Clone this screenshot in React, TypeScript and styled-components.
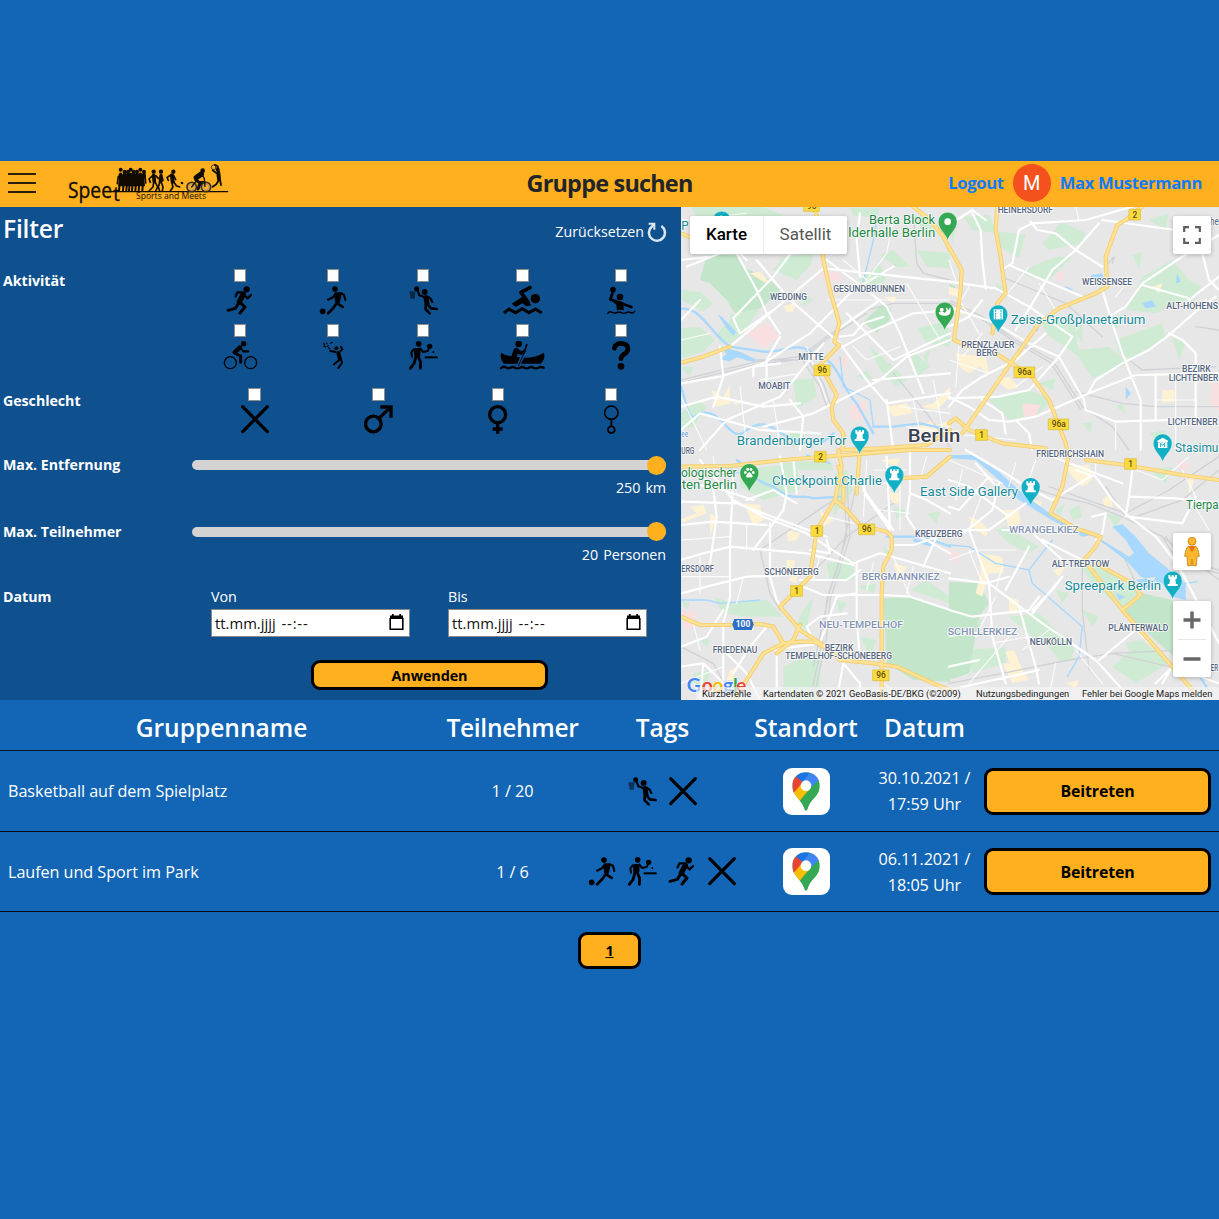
import React from "react";
import styled, { createGlobalStyle } from "styled-components";

const GlobalStyle = createGlobalStyle`
  * { box-sizing: border-box; }
  body {
    margin: 0;
    background: #1266b5;
    color: #fff;
    font-family: "Open Sans", "Noto Sans", sans-serif;
  }
`;

/* ---------- layout ---------- */

const Page = styled.div`
  display: flex;
  flex-direction: column;
  min-height: 1219px;
  padding-top: 161px;
  overflow: hidden;
`;

const Header = styled.header`
  display: grid;
  grid-template-columns: 1fr auto 1fr;
  align-items: center;
  height: 46px;
  background: #ffb01f;
`;

const HeaderLeft = styled.div`
  display: flex;
  align-items: center;
  padding: 0 0 2px 7px;
  gap: 30px;
`;

const Title = styled.h1`
  margin: 0;
  padding-bottom: 3px;
  color: #212529;
  font-size: 23.4px;
  font-weight: 700;
  letter-spacing: -0.77px;
`;

const HeaderRight = styled.div`
  display: flex;
  align-items: center;
  justify-content: flex-end;
  gap: 9px;
  padding: 0 17px 3px 0;
`;

const HeaderLink = styled.a`
  color: #0d7bff;
  font-size: 16.6px;
  font-weight: 700;
  letter-spacing: -0.34px;
`;

const Avatar = styled.div`
  display: grid;
  place-items: center;
  width: 38px;
  height: 38px;
  border-radius: 50%;
  background: #f4511e;
  color: #fff;
  font: 400 20px Roboto, sans-serif;
`;

const Main = styled.main`
  display: grid;
  grid-template-columns: 681px 1fr;
  height: 493px;
`;

/* ---------- filter ---------- */

const FilterPanel = styled.section`
  display: flex;
  flex-direction: column;
  background: #0f508f;
  font-size: 14.3px;
`;

const FilterHead = styled.div`
  display: flex;
  justify-content: space-between;
  align-items: center;
  height: 43px;
  padding: 0 14px 0 3px;
  margin-bottom: 17px;
`;

const FilterTitle = styled.h2`
  margin: 0;
  font-size: 24.6px;
  font-weight: 600;
  letter-spacing: -0.2px;
`;

const Reset = styled.button`
  display: flex;
  align-items: center;
  gap: 3px;
  padding: 5px 0 0;
  border: 0;
  background: none;
  color: #fff;
  font: inherit;
  font-size: 14.2px;

  svg {
    position: relative;
    top: 1px;
  }
`;

const Row = styled.div<{ $h: number }>`
  display: grid;
  grid-template-columns: 189px 1fr;
  height: ${(p) => p.$h}px;
  padding-left: 3px;
`;

const Label = styled.div<{ $top?: number }>`
  padding-top: ${(p) => p.$top ?? 0}px;
  line-height: 20px;
  font-weight: 700;
  font-size: 14.2px;
  letter-spacing: -0.03px;
`;

const OptionGrid = styled.div<{ $cols: string }>`
  display: grid;
  grid-template-columns: ${(p) => p.$cols};
  grid-auto-rows: 55px;
`;

const Option = styled.label`
  display: flex;
  flex-direction: column;
  align-items: center;
  padding-top: 2px;
  gap: 4px;
`;

const Check = styled.input.attrs({ type: "checkbox" })`
  appearance: none;
  width: 12.5px;
  height: 12.5px;
  margin: 0;
  border: 1px solid #8c8c8c;
  background: #fff;
`;

const SliderBlock = styled.div`
  display: flex;
  flex-direction: column;
  padding-right: 15px;
`;

const Slider = styled.input.attrs({ type: "range" })`
  appearance: none;
  width: 100%;
  height: 10px;
  margin: 5px 0 0;
  border-radius: 5px;
  background: #d3d3d3;
  &::-webkit-slider-thumb {
    appearance: none;
    width: 19px;
    height: 19px;
    border-radius: 50%;
    background: #ffb01f;
  }
`;

const SliderValue = styled.div`
  padding-top: 8px;
  line-height: 20px;
  text-align: right;
  word-spacing: 1.5px;
  letter-spacing: -0.08px;
`;

const Dates = styled.div`
  display: grid;
  grid-template-columns: 199px 199px;
  gap: 38px;
  padding-left: 19px;
`;

const DateField = styled.label`
  display: flex;
  flex-direction: column;
  line-height: 20px;
`;

const DateBox = styled.span`
  display: flex;
  align-items: center;
  justify-content: space-between;
  height: 28px;
  margin-top: 1.5px;
  padding: 0 4px 0 3px;
  border: 1px solid #8a8a8a;
  background: #fff;
  color: #111;
  font-size: 14.8px;
`;

const DateText = styled.span`
  word-spacing: 2px;
`;

const DashText = styled.span`
  letter-spacing: 0.8px;
`;

const YellowButton = styled.button<{ $w: number; $h: number; $size?: number }>`
  width: ${(p) => p.$w}px;
  height: ${(p) => p.$h}px;
  padding: 0;
  border: 3px solid #000;
  border-radius: 9px;
  background: #ffb01f;
  color: #000;
  font-family: inherit;
  font-weight: 700;
  font-size: ${(p) => p.$size ?? 14.4}px;
  letter-spacing: -0.1px;
`;

const ApplyRow = styled.div`
  padding-left: 311px;
`;

/* ---------- map ---------- */

const MapFrame = styled.section`
  position: relative;
  overflow: hidden;
  background: #e7e7e7;
  font-family: Roboto, sans-serif;
`;

const MapTypes = styled.div`
  position: absolute;
  top: 9px;
  left: 9px;
  display: flex;
  height: 38px;
  border-radius: 2px;
  background: #fff;
  box-shadow: 0 1px 4px rgba(0, 0, 0, 0.25);
`;

const MapType = styled.button<{ $active?: boolean }>`
  width: ${(p) => (p.$active ? 74 : 83)}px;
  padding: 0 0 2px;
  border: 0;
  border-right: ${(p) => (p.$active ? "1px solid #ececec" : "0")};
  background: none;
  color: ${(p) => (p.$active ? "#000" : "#565656")};
  font: ${(p) => (p.$active ? 500 : 400)} 17px Roboto, sans-serif;
`;

const MapControl = styled.div<{ $top: number; $h: number }>`
  position: absolute;
  top: ${(p) => p.$top}px;
  right: 8px;
  display: flex;
  flex-direction: column;
  align-items: center;
  justify-content: center;
  width: 38px;
  height: ${(p) => p.$h}px;
  border-radius: 2px;
  background: #fff;
  box-shadow: 0 1px 4px rgba(0, 0, 0, 0.25);
`;

const Attribution = styled.div`
  position: absolute;
  right: 0;
  bottom: 0;
  display: flex;
  height: 13px;
  color: #1a1a1a;
  font-size: 9.3px;
  line-height: 13px;
  white-space: nowrap;
`;

const Credit = styled.span<{ $w: number }>`
  width: ${(p) => p.$w}px;
  padding-left: 6px;
  background: rgba(245, 245, 245, 0.66);
`;

/* ---------- table ---------- */

const columns = "443px 139px 161px 126px 111px 239px";

const TableHead = styled.div`
  display: grid;
  grid-template-columns: ${columns};
  align-items: center;
  height: 51px;
  border-bottom: 1px solid #06182b;
  font-size: 24.6px;
  font-weight: 600;
  text-align: center;
  line-height: 1;
`;

const HeadCell = styled.div<{ $tight?: boolean }>`
  padding-top: 7px;
  letter-spacing: ${(p) => (p.$tight ? "-0.33px" : "-0.04px")};
`;

const TableRow = styled.div`
  display: grid;
  grid-template-columns: ${columns};
  align-items: center;
  height: 80.5px;
  padding-top: 1px;
  border-bottom: 1px solid #030c17;
  font-size: 16.2px;
  line-height: 26px;
  text-align: center;
  letter-spacing: -0.06px;
`;

const NameCell = styled.div`
  padding-left: 8px;
  text-align: left;
`;

const TagCell = styled.div`
  display: flex;
  justify-content: center;
  gap: 13px;
`;

const MapTile = styled.div`
  display: grid;
  place-items: center;
  width: 47px;
  height: 47px;
  margin: 0 auto;
  border-radius: 9px;
  background: #fff;
`;

const ActionCell = styled.div`
  padding-left: 4px;
  text-align: left;
  line-height: 0;
`;

const Pager = styled.nav`
  display: flex;
  justify-content: center;
  padding-top: 19.5px;
`;

const PageLink = styled(YellowButton)`
  text-decoration: underline;
`;

/* ---------- sport and gender icons ---------- */

const icons: Record<string, { w: number; art: React.ReactNode }> = {
  run: {
    w: 78,
    art: (
      <>
        <circle cx="59" cy="10" r="9.5" fill="#000" stroke="none" />
        <path d="M49 25L37 48" strokeWidth="16" />
        <path d="M46 19L31 19L26 31M52 28L62 37L72 27" strokeWidth="7" />
        <path d="M40 50L54 63L39 81M36 50L25 67L3 73" strokeWidth="9" />
      </>
    ),
  },
  soccer: {
    w: 78,
    art: (
      <>
        <circle cx="8" cy="76" r="8.5" fill="#000" stroke="none" />
        <circle cx="45" cy="9" r="8.5" fill="#000" stroke="none" />
        <path d="M48 24L60 24L55 46L50 46Z" fill="#000" strokeWidth="10" />
        <path d="M46 24L39 34L24 41M62 22L72 26L76 42" strokeWidth="6.5" />
        <path d="M51 50L40 66L24 82M54 54L68 63" strokeWidth="8" />
      </>
    ),
  },
  basketball: {
    w: 86,
    art: (
      <>
        <path d="M1 16L20 16L17 38L5 38Z" fill="#000" stroke="none" opacity=".5" />
        <circle cx="23" cy="8" r="7.5" fill="#000" stroke="none" />
        <circle cx="47" cy="18" r="9" fill="#000" stroke="none" />
        <path d="M25 12L31 28L46 33M56 32L65 38L70 48" strokeWidth="6.5" />
        <path d="M51 35L54 52" strokeWidth="15" />
        <path d="M50 56L50 70L62 82M56 56L66 67L83 69" strokeWidth="8" />
      </>
    ),
  },
  swim: {
    w: 118,
    art: (
      <>
        <path d="M81 5L54 19L76 50" strokeWidth="11" />
        <path d="M26 53L62 30L86 58L70 61L58 52L38 63Z" fill="#000" stroke="none" />
        <circle cx="97" cy="38" r="14" fill="#000" stroke="none" />
        <path d="M3 81L18 69L37 80L58 68L78 80L98 69L116 81" strokeWidth="9" strokeLinecap="butt" strokeLinejoin="miter" />
      </>
    ),
  },
  polo: {
    w: 85,
    art: (
      <>
        <circle cx="18" cy="11" r="8.5" fill="#000" stroke="none" />
        <circle cx="39" cy="33" r="10" fill="#000" stroke="none" />
        <path d="M16 22L10 40L40 51L73 63" strokeWidth="8.5" />
        <path d="M12 42L48 48L51 74Q46 68 42 73Q36 68 30 74L28 56Z" fill="#000" stroke="none" />
        <path d="M2 82Q8 74 15 79T29 80T43 80T57 80T71 80T83 76" strokeWidth="4" />
      </>
    ),
  },
  bike: {
    w: 99,
    art: (
      <>
        <circle cx="19" cy="65" r="18" strokeWidth="4" />
        <circle cx="80" cy="65" r="18" strokeWidth="4" />
        <circle cx="59" cy="8" r="8" fill="#000" stroke="none" />
        <path d="M48 19L32 34" strokeWidth="13" />
        <path d="M34 37L50 45L50 64" strokeWidth="9" />
        <path d="M49 20L58 31L73 31" strokeWidth="6.5" />
      </>
    ),
  },
  tennis: {
    w: 62,
    art: (
      <>
        <circle cx="40" cy="22" r="6" fill="#000" stroke="none" />
        <path d="M38 33L22 30M52 30L58 26L54 17" strokeWidth="6" />
        <path d="M46 36L50 52" strokeWidth="12" />
        <path d="M48 58L33 70M54 54L57 66L46 81" strokeWidth="6" />
        <path d="M2 6L4 12M3 16L8 18M10 8L12 7M13 16L16 14M23 7L28 4M21 24L16 20" strokeWidth="3.5" />
      </>
    ),
  },
  pingpong: {
    w: 86,
    art: (
      <>
        <circle cx="29" cy="8.5" r="8.5" fill="#000" stroke="none" />
        <path d="M20 26L30 26L29 44L21 44Z" fill="#000" strokeWidth="10" />
        <path d="M14 25L7 34L9 47M34 22L42 33L56 30L60 22" strokeWidth="6" />
        <circle cx="62" cy="16" r="8" fill="#000" stroke="none" />
        <circle cx="73" cy="33" r="3" fill="#000" stroke="none" />
        <path d="M47 49L86 49" strokeWidth="6" strokeLinecap="butt" />
        <path d="M20 50L15 68L4 82M29 50L35 64L34 82" strokeWidth="8.5" />
      </>
    ),
  },
  canoe: {
    w: 135,
    art: (
      <>
        <path d="M3 35Q18 46 34 45L42 24Q48 16 58 26L66 31L73 24L78 30L70 38L64 42L53 38L50 48L60 49L52 68L12 68Q-1 54 3 35Z" fill="#000" stroke="none" />
        <circle cx="56" cy="9" r="10" fill="#000" stroke="none" />
        <path d="M63 68L72 50Q105 51 132 35Q137 54 122 68Z" fill="#000" stroke="none" />
        <path d="M80 11L72 37" strokeWidth="5" />
        <path d="M72 37L55 74" strokeWidth="3" />
        <path d="M3 82Q10 74 17 79T31 80T45 80T59 80T73 80T87 80T101 80T115 80T131 80" strokeWidth="7" />
      </>
    ),
  },
  other: {
    w: 55,
    art: (
      <>
        <path d="M7 22Q10 7 27 7Q48 8 48 23Q48 32 37 39Q27 46 27 53" strokeWidth="14" />
        <circle cx="27" cy="76" r="10" fill="#000" stroke="none" />
      </>
    ),
  },
  any: { w: 84, art: <path d="M5 5L79 80M79 5L5 80" strokeWidth="9.5" /> },
  male: {
    w: 86,
    art: (
      <>
        <circle cx="28" cy="57" r="23.5" strokeWidth="10" />
        <path d="M46 39L79 7M49 6L81 6L81 38" strokeWidth="10" strokeLinecap="butt" strokeLinejoin="miter" />
      </>
    ),
  },
  female: {
    w: 58,
    art: (
      <>
        <circle cx="29" cy="29" r="24" strokeWidth="10" />
        <path d="M29 54L29 86M14 72L44 72" strokeWidth="10" strokeLinecap="butt" />
      </>
    ),
  },
  diverse: {
    w: 44,
    art: (
      <>
        <circle cx="22" cy="23" r="20" strokeWidth="4.5" />
        <path d="M22 43L22 63" strokeWidth="5.5" />
        <circle cx="22" cy="74" r="10" strokeWidth="5.5" />
      </>
    ),
  },
};

function Icon({ name }: { name: string }) {
  const { w, art } = icons[name];
  return (
    <svg width={w / 3} height={86 / 3} viewBox={`0 0 ${w} 86`} fill="none" stroke="#000" strokeLinecap="round" strokeLinejoin="round" overflow="visible">
      {art}
    </svg>
  );
}

/* ---------- header art ---------- */

const Burger = () => (
  <svg width="30" height="24" viewBox="0 0 30 24" stroke="#2b1d08" strokeWidth="2">
    <path d="M1 3H29M1 12H29M1 21H29" />
  </svg>
);

const crowd = [358, 370, 380, 388, 397, 407, 417, 428];

const Logo = () => (
  <svg width="162" height="44" viewBox="200 18 486 132" fill="none" stroke="#100b02" strokeLinecap="round" strokeLinejoin="round" overflow="visible">
    <g fill="#100b02" stroke="none" fontFamily="'Open Sans', sans-serif">
      <text x="203" y="129" fontSize="64" textLength="132" lengthAdjust="spacingAndGlyphs" stroke="#100b02" strokeWidth="1">Spee</text>
      <text x="339" y="137" fontSize="62" textLength="20" lengthAdjust="spacingAndGlyphs" stroke="#100b02" strokeWidth="1">t</text>
      <text x="407" y="131" fontSize="26" textLength="210" lengthAdjust="spacingAndGlyphs">Sports and Meets</text>
    </g>
    <path d="M330 110H682" strokeWidth="4" />
    <path d="M360 62H428L432 92H356Z" fill="#100b02" strokeWidth="4" />
    {crowd.map((x, i) => (
      <g key={x}>
        <circle cx={x + 3} cy={i % 3 === 0 ? 44 : 50} r="6" fill="#100b02" stroke="none" />
        <path d={`M${x + 3} 58V66`} strokeWidth="11" />
        <path d={`M${x + 2} 60L${x} 84L${x - 2} 107`} strokeWidth="6" />
      </g>
    ))}
    <path d="M354 64L351 86M434 62L436 84" strokeWidth="5" />
    <g strokeWidth="5">
      <circle cx="460" cy="50" r="4" fill="#100b02" />
      <path d="M460 62L462 80" strokeWidth="11" />
      <path d="M457 62L446 72L450 82M466 62L474 70M460 82L458 96L446 108M465 82L472 96L466 108" />
      <circle cx="482" cy="50" r="4" fill="#100b02" />
      <path d="M482 62L480 80" strokeWidth="10" />
      <path d="M484 62L488 76L480 82M478 82L474 96L478 108M483 82L488 96L486 108" />
      <circle cx="519" cy="50" r="4" fill="#100b02" />
      <path d="M515 61L517 80" strokeWidth="12" />
      <path d="M511 60L500 68L504 76M520 62L526 74M514 82L518 96L510 108M520 80L528 92L538 96" />
      <circle cx="545" cy="84" r="4" fill="#100b02" stroke="none" />
    </g>
    <g>
      <circle cx="574" cy="96" r="14" stroke="#3a3022" strokeWidth="5" />
      <circle cx="617" cy="96" r="14" stroke="#3a3022" strokeWidth="5" />
      <circle cx="574" cy="96" r="9" stroke="#b09a78" strokeWidth="3" />
      <circle cx="617" cy="96" r="9" stroke="#b09a78" strokeWidth="3" />
      <circle cx="607" cy="47" r="7" fill="#100b02" stroke="none" />
      <path d="M603 57L588 68" strokeWidth="16" />
      <path d="M586 74L599 84L593 102" strokeWidth="9" />
      <path d="M604 58L612 70L614 94M574 96L586 80H610M592 98L606 82" strokeWidth="4" />
    </g>
    <g strokeWidth="5.5">
      <circle cx="640" cy="37" r="7" strokeWidth="2" />
      <circle cx="652" cy="44" r="6" fill="#100b02" stroke="none" />
      <path d="M654 54L656 72" strokeWidth="12" />
      <path d="M648 54L637 46M656 52L652 34L644 29M655 76L648 88L637 95M659 74L662 90" />
    </g>
  </svg>
);

const ResetIcon = () => (
  <svg width="20" height="20" viewBox="0 0 60 60" fill="none" stroke="#dce6f0" strokeWidth="7.5">
    <path d="M43 12A24 24 0 1 1 12 16" />
    <path d="M5 5H22V23" strokeWidth="6" />
    <path d="M22 5L9 20" strokeWidth="7" />
  </svg>
);

const CalendarIcon = () => (
  <svg width="17" height="17" viewBox="0 0 17 17">
    <path d="M2 1.5H15V5H2Z" fill="#000" />
    <path d="M2.2 4V15.2H14.8V4" fill="none" stroke="#000" strokeWidth="1.6" />
    <path d="M4.8 0V3M12.2 0V3" stroke="#000" strokeWidth="1.8" />
  </svg>
);

const MapsLogo = () => (
  <svg width="28" height="39" viewBox="0 0 84 117">
    <defs>
      <clipPath id="maps-pin">
        <path d="M42 1C65 1 83 18 83 41C83 61 71 72 60 85C52 95 49 103 46 112Q42 120 38 112C35 101 31 95 24 86C12 71 1 61 1 41C1 18 19 1 42 1Z" />
      </clipPath>
    </defs>
    <g clipPath="url(#maps-pin)">
      <rect width="84" height="117" fill="#34a853" />
      <path d="M0 62L28 28L58 48L22 90L0 90Z" fill="#fbbc04" />
      <path d="M0 0L15 14L42 40L28 36L4 64L0 64Z" fill="#ea4335" />
      <path d="M13 14L32 30L56 0H13Z" fill="#1a73e8" />
      <path d="M30 32L62 -6L84 22L52 52Z" fill="#4285f4" />
      <path d="M84 22L52 52L22 88L40 117H84Z" fill="#34a853" />
    </g>
    <circle cx="42" cy="41" r="16" fill="#fff" />
  </svg>
);

/* ---------- street map, drawn in four tiles ---------- */

const tiles = [
  {
    at: "translate(0 0)",
    park: "M30 18H240L310 45L250 60H60ZM3 270L60 275L100 310L70 335L3 300ZM3 385L60 380L105 420L70 455L3 475ZM180 330L240 325L190 400L150 430L120 430L110 400ZM340 540L400 535L410 590L350 625ZM310 170L400 160L395 190L350 240L280 210ZM510 25H600L590 50L520 48ZM600 165L640 150L690 200L650 200ZM690 50L740 45L760 90L720 80ZM710 150L810 160V205L740 200ZM710 385L780 370L810 390V440L740 430ZM690 445L750 500L710 530ZM570 440L640 500L680 540L650 560L600 510ZM3 640L50 600L80 620L40 680L3 690ZM360 270L400 300L370 320ZM540 240L600 190L620 240L560 270ZM730 470L750 440L740 500ZM3 500L40 500L30 530ZM330 700L380 690L370 720L340 745ZM530 530L560 510L580 540ZM150 340L170 345L150 380Z",
    deep: "M80 165H170L190 200L270 240L300 270L260 310L240 325L165 340L140 300L90 250L60 240ZM550 365L610 310L635 330L630 360L590 400Z",
    pink: "M200 400L265 370L300 410L250 445ZM510 620L560 600L550 660L510 655ZM468 480L500 465L500 510ZM405 225L480 215L485 245L430 235Z",
    sand: "M95 570L115 575L125 600L150 555L150 610L110 620ZM210 220L240 215L270 250L250 245ZM310 320L350 305L340 335L320 335ZM610 290L650 290L640 310ZM620 620L680 610L700 640L640 650ZM720 620L760 610L810 560V590L770 630ZM700 690L760 660L770 680L720 720ZM740 690L810 660V700ZM150 600L190 600L170 615Z",
    lake: "M112 342L125 350L168 395L160 408L140 385ZM120 440L180 455L226 478L222 486L170 472L150 484L120 478L140 462Z",
    river: "M3 326C70 325 80 390 150 440L250 455C310 460 350 420 400 460C480 480 480 560 530 610L580 700M3 560C20 600 20 680 60 640C130 620 150 740 200 690C260 650 280 690 330 715C400 740 420 740 460 700M580 680L640 680L720 670L810 690",
    thinRiver: "M590 60L580 120L550 245M480 470L490 560L570 600L580 680",
    rail: "M3 540L230 485L360 470L440 410L560 330L640 310H810M3 548L230 493L360 478L450 410L560 340M360 470L420 560L440 620M375 470L430 550L450 610M700 40L710 190L730 220L810 240M200 480L380 480M640 520L740 640L810 740",
    road: "M150 440L430 205L810 245M160 355L280 230L340 150L480 50M160 355L180 400L280 330M170 160L230 270L260 340L300 400M230 180L330 300L480 430L560 540L620 610L810 580M3 550L120 530L250 490L390 400L520 270L640 200M3 620L110 590L250 620L360 610M60 750L140 660L300 590L430 430M3 690L60 640L240 690L420 700M120 440L130 530L100 620M260 550L260 480L300 410M440 180L560 270L620 320L660 400L730 580M470 390L600 300M480 410L520 405L550 370L610 350M490 440L560 400L700 340L810 330M810 420L680 470L600 540L500 590L400 640L250 680M620 600L640 750M580 540L810 520M540 230L530 120L540 40M20 200L120 160L180 80M80 60L200 180M330 600L370 650L360 750M220 530L220 500L300 490M500 340L580 420L640 480L810 400M3 180L90 170M60 300L3 360",
    lane: "M440 300H810M680 250L780 420M700 600L730 750M760 540L790 700M660 620L810 640M680 680L810 700M3 590L80 750M180 560L200 740M280 600L300 740M560 240L490 180M640 60L620 160L560 240M3 60L200 40M240 540L360 520M380 440L440 600M520 440L560 480L660 440M3 420L90 400",
    gold: "M3 488L70 470L150 440M400 20L415 60L430 180L450 270L478 370L463 425L478 435L420 495L470 585L455 620L460 660L490 700L488 750M490 750L600 745L740 735L810 690M700 20L750 60L790 110L810 150M3 100L50 120",
  },
  {
    at: "translate(807 0)",
    park: "M45 50L120 45L145 100L70 90ZM150 95L230 105L210 175L150 140ZM280 130L340 65L410 100L400 130L300 150ZM210 215L320 170L370 170L300 240L240 230ZM530 330L580 230L670 180L720 240L760 260L730 290L620 340ZM280 360L370 350L390 450L480 440L540 490L430 535L390 470L290 400ZM500 420L640 370L650 410L550 480L510 460ZM120 600L240 570L310 600L270 640L180 660ZM670 410L710 430L690 480ZM270 550L320 535L310 570ZM480 360L530 340L500 390ZM550 165L580 155L570 210ZM600 700L650 690L630 730ZM400 670L430 665L425 700ZM140 250L160 260L150 280ZM500 620L520 610L530 640ZM0 80L20 90L10 130ZM600 60L660 40L650 90ZM400 430L380 400L400 360Z",
    deep: "M0 250L20 260L15 290Z",
    pink: "M220 610L275 615L260 645L225 650ZM315 225L340 210L350 235L330 245ZM790 550L810 545V630L785 620Z",
    sand: "M20 460L110 470L120 520L90 500L60 520L30 500ZM140 540L180 530L210 560L180 570ZM640 570L680 570L675 605L640 608ZM0 260L40 270L30 290L0 285ZM20 320L60 320L40 345ZM0 690L30 690L20 720H0ZM610 260L640 250L630 280Z",
    lake: "M425 225L460 220L465 240L430 240ZM580 310L610 300L620 320L590 325ZM685 220L695 245L680 250ZM530 560L545 580L530 600ZM250 380L270 380L265 395Z",
    river: "",
    thinRiver: "M350 260L370 270",
    rail: "M0 300L100 350L200 420L310 480L400 620L490 680L540 750M0 308L100 358L200 428L305 488L395 628M170 235L350 310L460 410M540 480L580 510L800 500M380 575L520 610L620 620H810M740 380L810 390M470 200L495 170L490 190",
    road: "M0 245L140 265L240 320L370 410L330 470L240 570L150 590L0 595M0 75L70 30L110 60M250 70L410 60L550 20M245 65L265 90L320 100L380 150L460 200M460 60L680 90M450 70L380 150L310 210L250 310L200 390M110 265L100 180L95 90L70 40M165 205L190 190L210 90L250 70M180 195L260 230L400 290M460 270L490 370L520 460L575 600V750M810 230L720 300M640 210L580 250L530 320L480 350M810 105L700 170L640 210M580 255L720 295M770 300L750 320M810 270L780 240L760 160M0 320L140 370L240 430L330 470L405 600L410 630L500 665L660 660M420 575L440 540L520 490L600 450L660 405L740 335L800 290M660 400L700 420L740 460V660M0 590L60 620L120 660L180 665L260 650L420 580L560 525L810 520M620 530V660M205 665L240 700L250 750M0 620L40 570L100 530L200 480L290 400M100 600L160 640L170 700M0 380L60 350L100 300",
    lane: "M20 280L90 400M60 260L20 330M100 400L40 470M0 480L120 520M30 440L20 560M200 560L280 500M270 250L320 330M390 60L380 20M0 180L20 240M260 560L300 600M500 665V750M680 530V750M620 600H740M500 290L540 240M0 700L200 720M160 300L240 200",
    gold: "M145 20L140 90L155 170L165 250L170 280L145 310L130 400M0 140L38 210L35 270L15 420M580 20L530 60L505 75L470 170L475 260L440 280L330 325L270 370L185 490L40 700M15 420L60 440M140 460L250 530L300 600L350 730L355 750M0 670L20 655L60 690L160 730L290 745",
  },
  {
    at: "translate(0 750)",
    park: "M180 60L350 40L360 120L250 150L180 110ZM100 440L160 460L260 450L310 500L200 500L130 490ZM370 480L400 440L380 540L350 520ZM310 650L420 600V750H310ZM440 340L520 330L520 390H450ZM470 450L500 460L480 490ZM3 450L30 460L20 480ZM640 170L680 180L650 210ZM740 190L780 185L770 220ZM530 410L590 400L580 430ZM690 420L740 390L810 440V460ZM40 670L90 660L80 710L40 700ZM470 70L500 60L520 120L460 200ZM300 40L450 30L460 60H310ZM610 290L640 310L620 330ZM60 570L90 565L80 590ZM540 560L590 570L570 620Z",
    deep: "M610 445L700 440L810 480V695L700 690L620 640Z",
    pink: "M3 480L50 485L40 530L15 540ZM785 290L810 300V330Z",
    sand: "M30 170L70 165L80 190L3 220V208L50 190ZM190 160L240 165L250 210L220 225L200 180ZM320 240L360 250L350 270L325 275ZM320 330L345 330L340 370L320 360ZM325 390L350 360V400ZM620 60L640 60L650 90L625 95ZM600 30L660 25L650 50ZM640 340L680 350L660 400ZM420 180L460 210L430 230ZM150 660L165 655L160 690L140 690ZM90 190L110 200L90 260ZM620 125L660 130L655 160L640 160Z",
    lake: "M700 265L760 280L755 290L700 275Z",
    river: "M170 30C220 60 210 90 280 110C340 160 360 130 400 145L480 140M620 260H730L810 290",
    thinRiver: "M120 45L180 70M3 450H80L120 460L240 450M380 15L450 40",
    rail: "M490 80L500 260L440 450L430 560L390 750M500 80L510 260L450 450L440 560L400 750M530 100L480 330L450 420L400 650M240 300L460 150M240 300L270 430L300 480M330 440L500 260L640 160M3 590L100 640L160 750",
    road: "M3 155L170 160L330 220L440 260M60 30L160 150L250 200L380 250L520 340L600 310L810 370M300 20L320 130L310 180L220 300M3 225L100 215L260 225M160 70L150 290L150 440L130 520V690M3 330L70 310L150 290L380 310L520 345M340 30L350 130M620 20L630 240M550 120L640 240M540 80L560 140L630 240M690 130L680 200L720 260L810 310M690 0L690 130L740 150L810 190M3 430L80 410L200 380L340 375M270 220V380L290 450L310 480M360 390L500 390L540 360M370 410L430 435H610L690 440L810 480M530 340L530 500L540 640M260 530L210 590L160 670M3 590L80 560L130 480M280 600L420 580L470 440L530 430M140 610L200 670L240 750M290 600V750M470 750L490 640L540 700V750M3 100L100 110L220 150M440 270L450 310L390 300M770 260L730 350M640 285L700 285L810 250M0 650L70 640L130 700M70 640L60 750M200 150L280 120L350 160M100 120L110 200L90 340M400 570L380 530L420 500L500 490",
    lane: "M60 320V430M3 380H150M190 380L170 460M540 90L620 100M560 30L550 200M580 60H680M660 90V240M3 700L130 650M60 600L40 520M420 320L400 390M640 320L690 440M700 350L680 430M220 540L180 510M580 340L560 420M740 20L720 90M600 180L690 190M3 270L150 260M200 220V300M440 200L520 220M610 700L680 750M100 20L110 110",
    gold: "M3 50L150 48L310 30L560 10L690 0H810M475 0L485 50L465 150L410 240L400 310L390 380L300 470L360 540L430 585L480 630L580 640L650 650L760 700L810 720M475 50L490 90V155M538 20L530 130M465 150L500 180L540 225L620 245L635 260L635 300L610 350L605 430V750M810 20L740 80L660 85M3 500L60 525L160 525L240 522L280 530L310 580L250 610L200 690L170 740M310 580L360 575L400 575L430 590M360 525L340 570L290 610",
  },
  {
    at: "translate(807 750)",
    park: "M140 240L170 230L270 290L240 310L180 280ZM360 180L390 165L400 200L370 210ZM490 650L580 570L660 640L560 700ZM180 500L270 490L380 600L360 620L250 560ZM380 330L450 340L570 430L520 480L430 400ZM320 420L360 430L340 460ZM160 190L180 190L170 220ZM530 580L570 570L600 610L550 630ZM400 480L450 500L430 530ZM470 190L520 200L500 230ZM60 600L170 590L170 640L70 670ZM0 630L90 620L60 670L0 690ZM260 540L330 580L380 630L330 630ZM600 60L670 50L650 100ZM320 180L350 160L330 200ZM60 500L90 480L100 560Z",
    deep: "M0 395L90 400L120 460L90 500L60 670L0 690ZM520 480L580 430L670 450L675 620Z",
    pink: "M690 35L720 40L710 65L690 60ZM0 300L30 310L20 350Z",
    sand: "M160 180L210 180L215 220L180 230ZM60 200L90 210L120 240L110 260L70 230ZM90 310L160 320L165 370L120 370L100 440L80 430L95 370ZM180 440L210 450L205 490L180 490ZM350 50L420 45L430 90L400 110L370 80ZM460 150L485 130L490 170L470 175ZM250 150L280 155L270 175ZM170 605L195 600L220 660L240 690L190 700L160 640L180 640ZM720 70L735 90L720 140ZM310 360L350 350L330 380ZM350 700L390 690L380 715Z",
    lake: "M0 25L80 30L150 90L210 150L300 205L400 260L430 255L530 330L575 380L640 400L670 440L710 450V400L650 350L600 310L560 260L520 222L490 230L530 270L555 310L540 320L450 265L330 210L220 130L150 65L70 15H0ZM500 430L530 440L510 450ZM560 390L620 380L600 420Z",
    river: "M740 660L775 715",
    thinRiver: "M0 285L60 290L140 340L240 360L310 270M240 360L250 400L400 530L390 620L355 680M710 400L745 395",
    rail: "M240 110L330 140L420 160L530 205L640 260L810 390M300 110L530 190L660 120L810 20M560 200L700 150L810 60M0 700L160 670L360 630L490 610L700 600M400 350V480L420 660M470 110L530 200M490 610L660 650M640 260L690 340L810 370M650 260L700 330L810 360M420 250L520 310L560 400",
    road: "M50 0L170 70L230 110L310 150L440 70L520 100M120 80L30 180L0 170M0 240H120L230 160M150 100L130 180L30 260M60 240L120 400L130 560L170 700M0 385L120 400L200 460L280 520L440 630L540 740M170 420L240 290M110 400L180 380M340 330L240 240L160 240M250 490L340 380M0 480L70 500L240 480L270 440M250 480L310 420L340 380M210 470L260 650L270 700M0 720L270 660M550 60L540 140L530 200M430 200L470 190L460 250L440 270M380 60L440 80L490 150L540 200L620 260L660 310L700 370L810 580M540 140L680 145L810 160M450 630L560 540M280 270L400 330M640 700L670 650M540 200L700 220L740 140M310 20L440 70M0 90L60 110L180 200M80 40L160 130M0 650L90 630M620 700L670 650L810 700",
    lane: "M0 30L160 100M40 60L20 150M100 130L60 240M200 40L180 110M260 30L240 90M440 20V70M560 60L640 90L720 20M700 60L740 140M720 140L780 240M0 330L80 300L200 300M60 300L100 400M140 440L80 560M180 560L60 700M240 560L130 580M300 540L220 600M160 350L140 420M320 640L300 740M380 600L460 700M560 540L640 620M0 560L130 540",
    gold: "M360 10L340 110L305 190L380 235L455 260L440 290L405 330L520 480L670 650L730 720M410 30L530 45L700 75L810 90M450 345L550 400L575 435L520 480",
  },
];

const Tiles = ({ kind, ...rest }: { kind: keyof (typeof tiles)[0] } & React.SVGProps<SVGPathElement>) => (
  <>
    {tiles.map((t) => (
      <path key={t.at} transform={t.at} d={t[kind]} {...rest} />
    ))}
  </>
);

type MapText = [string, number, number, number];

const districts: MapText[] = [
  ["WEDDING", 270, 301, 111], ["GESUNDBRUNNEN", 460, 275, 215], ["MITTE", 355, 480, 76], ["MOABIT", 235, 568, 96],
  ["HEINERSDORF", 953, 39, 166], ["WEISSENSEE", 1206, 254, 150], ["ALT-HOHENS", 1459, 327, 155], ["PRENZLAUER", 844, 443, 159],
  ["BERG", 889, 469, 64], ["BEZIRK", 1506, 517, 86], ["LICHTENBER", 1466, 542, 149], ["LICHTENBER", 1463, 675, 150],
  ["URG", 4, 761, 39], ["KREUZBERG", 705, 1011, 143], ["ERSDORF", 4, 1116, 98], ["SCHÖNEBERG", 253, 1124, 163],
  ["FRIEDENAU", 98, 1360, 134], ["BEZIRK", 434, 1352, 86], ["TEMPELHOF-SCHÖNEBERG", 316, 1378, 320],
  ["FRIEDRICHSHAIN", 1069, 772, 203], ["ALT-TREPTOW", 1115, 1100, 173], ["PLÄNTERWALD", 1285, 1292, 180],
  ["NEUKÖLLN", 1049, 1335, 127], ["ER", 1592, 1412, 22],
];
const quarters: MapText[] = [
  ["BERGMANNKIEZ", 545, 1139, 234], ["NEU-TEMPELHOF", 417, 1284, 252], ["WRANGELKIEZ", 987, 1000, 209], ["SCHILLERKIEZ", 803, 1306, 209],
];
const sights: MapText[] = [
  ["P", 4, 89, 22], ["Brandenburger Tor", 170, 735, 330], ["Zeiss-Großplanetarium", 992, 371, 404], ["Stasimu", 1485, 757, 130],
  ["Checkpoint Charlie", 276, 854, 330], ["East Side Gallery", 720, 888, 294], ["Spreepark Berlin", 1154, 1170, 289],
];
const greens: MapText[] = [
  ["Berta Block", 567, 72, 198], ["lderhalle Berlin", 505, 112, 261], ["ologischer", 3, 830, 167], ["ten Berlin", 5, 868, 166], ["Tierpa", 1518, 926, 98],
];

const Texts = ({ items, ...rest }: { items: MapText[] } & React.SVGProps<SVGGElement>) => (
  <g stroke="#fff" strokeOpacity=".85" strokeWidth="5" strokeLinejoin="round" paintOrder="stroke" {...rest}>
    {items.map(([label, x, y, len], i) => (
      <text key={i} x={x} y={y} textLength={len} lengthAdjust="spacingAndGlyphs">{label}</text>
    ))}
  </g>
);

const badges: [string, number, number, number][] = [
  ["96", 372, 2, 46], ["96", 403, 495, 47], ["2", 1348, 28, 33], ["96a", 1003, 501, 61], ["96a", 1106, 657, 60], ["1", 888, 689, 34],
  ["2", 405, 754, 33], ["1", 394, 977, 34], ["96", 537, 972, 47], ["1", 333, 1157, 34], ["96", 579, 1410, 48], ["1", 1335, 776, 34],
];

const Pin = ({ x, y, color, children }: { x: number; y: number; color: string; children?: React.ReactNode }) => (
  <g transform={`translate(${x} ${y})`}>
    <path d="M0 56C-3 38 -28 24 -28 0A28 28 0 0 1 28 0C28 24 3 38 0 56Z" fill={color} stroke="#fff" strokeOpacity=".55" strokeWidth="1.5" />
    <g fill="#fff">{children}</g>
  </g>
);

const Tower = () => <path d="M-13 -17H-7V-12H-3V-17H3V-12H7V-17H13V-7L8 -3L10 10H15V16H-15V10H-10L-8 -3L-13 -7Z" />;

const teal = "#12b0c4";
const green = "#34a853";

const googleLetters: [string, number, string][] = [
  ["G", 20, "#4285f4"], ["o", 65, "#ea4335"], ["o", 97, "#fbbc04"], ["g", 129, "#4285f4"], ["l", 159, "#34a853"], ["e", 168, "#ea4335"],
];

const StreetMap = () => (
  <svg width="538" height="493" viewBox="3 21 1614 1479" fill="none" strokeLinejoin="round" strokeLinecap="round">
    <rect x="3" y="21" width="1614" height="1479" fill="#e7e7e7" />
    <Tiles kind="park" fill="#cfebd3" />
    <Tiles kind="deep" fill="#c3e5c9" />
    <Tiles kind="pink" fill="#fadfe1" />
    <Tiles kind="sand" fill="#fdf2d4" />
    <Tiles kind="rail" stroke="#d0d2d6" strokeWidth="4" />
    <Tiles kind="thinRiver" stroke="#a8d8fd" strokeWidth="4" />
    <Tiles kind="river" stroke="#a8d8fd" strokeWidth="7" />
    <Tiles kind="lake" fill="#a8d8fd" />
    <Tiles kind="lane" stroke="#fff" strokeWidth="3.5" strokeOpacity=".85" />
    <Tiles kind="road" stroke="#fff" strokeWidth="6.5" />
    <Tiles kind="gold" stroke="#f4cc6c" strokeWidth="12.5" />
    <Tiles kind="gold" stroke="#ffe294" strokeWidth="7.5" />
    <g fontFamily="Roboto, sans-serif">
      {badges.map(([n, x, y, w], i) => (
        <g key={i}>
          <rect x={x} y={y} width={w} height="32" fill="#fbdb3c" stroke="#d8b92c" strokeWidth="2" />
          <text x={x + w / 2} y={y + 25} fontSize="25" fontWeight="500" textAnchor="middle" fill="#5a4a10">{n}</text>
        </g>
      ))}
      <path d="M163 1257H215L221 1273L215 1290H163L157 1273Z" fill="#2c6fc9" />
      <text x="189" y="1282" fontSize="25" fontWeight="700" textAnchor="middle" fill="#fff">100</text>
      <Texts items={districts} fill="#55657f" fontSize="25.5" fontWeight="500" />
      <Texts items={quarters} fill="#8393b5" fontSize="26" fontWeight="500" />
      <Texts items={sights} fill="#138a99" fontSize="39" />
      <Texts items={greens} fill="#1c8a45" fontSize="39" />
      <Texts items={[["ee", 4, 712, 20]]} fill="#5f8fd0" fontSize="28" />
      <Texts items={[["he", 1590, 75, 26]]} fill="#5a6270" fontSize="32" />
      <Texts items={[["Berlin", 683, 725, 158]]} fill="#3c4250" fontSize="54" fontWeight="500" />
    </g>
    <Pin x={125} y={62} color={teal}><path d="M-3 -18L12 -4L-3 4Z" /></Pin>
    <Pin x={803} y={65} color={green}><circle r="10" /></Pin>
    <Pin x={794} y={335} color={green}>
      <circle cx="-9" cy="-6" r="6" />
      <path d="M-18 2Q-9 -3 0 3L6 -3L3 -12H8L10 -6H14V-12H18V0Q16 14 -4 12Q-17 12 -18 2Z" />
    </Pin>
    <Pin x={955} y={343} color={teal}>
      <path d="M-14 -15H14V15H-14Z" />
      <path d="M-8 -12V13M8 -12V13" stroke={teal} strokeWidth="3" strokeDasharray="4 4" />
    </Pin>
    <Pin x={539} y={707} color={teal}><Tower /></Pin>
    <Pin x={643} y={825} color={teal}><Tower /></Pin>
    <Pin x={1052} y={861} color={teal}><Tower /></Pin>
    <Pin x={1478} y={1142} color={teal}><Tower /></Pin>
    <Pin x={1448} y={730} color={teal}>
      <path d="M0 -17L16 -8V-4H-16V-8ZM-14 -3H14V14H-14Z" />
      <path d="M-6 10V0L0 6L6 0V10" fill="none" stroke={teal} strokeWidth="3" />
    </Pin>
    <Pin x={208} y={819} color={green}>
      <ellipse cx="-12" cy="-2" rx="4" ry="5" /><ellipse cx="-5" cy="-11" rx="4" ry="5" />
      <ellipse cx="5" cy="-11" rx="4" ry="5" /><ellipse cx="12" cy="-2" rx="4" ry="5" />
      <path d="M0 -3Q6 0 10 9Q10 15 0 13Q-10 15 -10 9Q-6 0 0 -3Z" />
    </Pin>
    <g fontFamily="Lato, sans-serif" fontSize="58" fontWeight="700" stroke="#fff" strokeWidth="3" paintOrder="stroke">
      {googleLetters.map(([letter, x, color]) => (
        <text key={x} x={x} y="1477" fill={color}>{letter}</text>
      ))}
    </g>
  </svg>
);

const Pegman = () => (
  <svg width="18" height="30" viewBox="0 0 54 90">
    <circle cx="27" cy="13" r="12" fill="#fbb62a" stroke="#c9821a" strokeWidth="2.5" />
    <path d="M16 28H38Q45 30 49 58H42L40 86H29L27 66L25 86H14L12 58H5Q9 30 16 28Z" fill="#fbb62a" stroke="#c9821a" strokeWidth="2.5" />
    <path d="M16 28H38L27 46Z" fill="#e8711c" />
  </svg>
);

const Fullscreen = () => (
  <svg width="18" height="18" viewBox="0 0 18 18" fill="none" stroke="#5f5f5f" strokeWidth="2.2">
    <path d="M1.2 6V1.2H6M12 1.2H16.8V6M16.8 12V16.8H12M6 16.8H1.2V12" />
  </svg>
);

const Zoom = () => (
  <svg width="38" height="76" viewBox="0 0 38 76" stroke="#666" strokeWidth="3.4">
    <path d="M10.5 19H27.5M19 10.5V27.5M10.5 58H27.5" />
    <path d="M5 38.5H33" stroke="#e6e6e6" strokeWidth="1" />
  </svg>
);

/* ---------- page ---------- */

const sports = ["run", "soccer", "basketball", "swim", "polo", "bike", "tennis", "pingpong", "canoe", "other"];
const genders = ["any", "male", "female", "diverse"];

const groups = [
  { name: "Basketball auf dem Spielplatz", members: "1 / 20", tags: ["basketball", "any"], date: "30.10.2021 /", time: "17:59 Uhr" },
  { name: "Laufen und Sport im Park", members: "1 / 6", tags: ["soccer", "pingpong", "run", "any"], date: "06.11.2021 /", time: "18:05 Uhr" },
];

export default function App() {
  return (
    <Page>
      <GlobalStyle />
      <Header>
        <HeaderLeft>
          <Burger />
          <Logo />
        </HeaderLeft>
        <Title>Gruppe suchen</Title>
        <HeaderRight>
          <HeaderLink>Logout</HeaderLink>
          <Avatar>M</Avatar>
          <HeaderLink>Max Mustermann</HeaderLink>
        </HeaderRight>
      </Header>

      <Main>
        <FilterPanel>
          <FilterHead>
            <FilterTitle>Filter</FilterTitle>
            <Reset>
              Zurücksetzen <ResetIcon />
            </Reset>
          </FilterHead>
          <Row $h={119}>
            <Label $top={4}>Aktivität</Label>
            <OptionGrid $cols="96px 90px 90px 109px 88px">
              {sports.map((s) => (
                <Option key={s}>
                  <Check />
                  <Icon name={s} />
                </Option>
              ))}
            </OptionGrid>
          </Row>
          <Row $h={69}>
            <Label $top={5}>Geschlecht</Label>
            <OptionGrid $cols="125px 123px 116px 110px">
              {genders.map((g) => (
                <Option key={g}>
                  <Check />
                  <Icon name={g} />
                </Option>
              ))}
            </OptionGrid>
          </Row>
          <Row $h={66.5}>
            <Label>Max. Entfernung</Label>
            <SliderBlock>
              <Slider min={0} max={250} defaultValue={250} />
              <SliderValue>250 km</SliderValue>
            </SliderBlock>
          </Row>
          <Row $h={65.5}>
            <Label>Max. Teilnehmer</Label>
            <SliderBlock>
              <Slider min={2} max={20} defaultValue={20} />
              <SliderValue>20 Personen</SliderValue>
            </SliderBlock>
          </Row>
          <Row $h={73}>
            <Label>Datum</Label>
            <Dates>
              {["Von", "Bis"].map((d) => (
                <DateField key={d}>
                  {d}
                  <DateBox>
                    <DateText>
                      tt.mm.jjjj <DashText>--:--</DashText>
                    </DateText>
                    <CalendarIcon />
                  </DateBox>
                </DateField>
              ))}
            </Dates>
          </Row>
          <ApplyRow>
            <YellowButton $w={237} $h={30}>Anwenden</YellowButton>
          </ApplyRow>
        </FilterPanel>

        <MapFrame>
          <StreetMap />
          <MapTypes>
            <MapType $active>Karte</MapType>
            <MapType>Satellit</MapType>
          </MapTypes>
          <MapControl $top={9} $h={38}>
            <Fullscreen />
          </MapControl>
          <MapControl $top={326} $h={37}>
            <Pegman />
          </MapControl>
          <MapControl $top={394} $h={76}>
            <Zoom />
          </MapControl>
          <Attribution>
            <Credit $w={61}>Kurzbefehle</Credit>
            <Credit $w={213}>Kartendaten © 2021 GeoBasis-DE/BKG (©2009)</Credit>
            <Credit $w={106}>Nutzungsbedingungen</Credit>
            <Credit $w={143}>Fehler bei Google Maps melden</Credit>
          </Attribution>
        </MapFrame>
      </Main>

      <TableHead>
        <HeadCell>Gruppenname</HeadCell>
        <HeadCell $tight>Teilnehmer</HeadCell>
        <HeadCell>Tags</HeadCell>
        <HeadCell>Standort</HeadCell>
        <HeadCell>Datum</HeadCell>
      </TableHead>
      {groups.map((g) => (
        <TableRow key={g.name}>
          <NameCell>{g.name}</NameCell>
          <div>{g.members}</div>
          <TagCell>
            {g.tags.map((t) => (
              <Icon key={t} name={t} />
            ))}
          </TagCell>
          <MapTile>
            <MapsLogo />
          </MapTile>
          <div>
            {g.date}
            <br />
            {g.time}
          </div>
          <ActionCell>
            <YellowButton $w={227} $h={47} $size={15.9}>Beitreten</YellowButton>
          </ActionCell>
        </TableRow>
      ))}
      <Pager>
        <PageLink $w={63} $h={37.5}>1</PageLink>
      </Pager>
    </Page>
  );
}
